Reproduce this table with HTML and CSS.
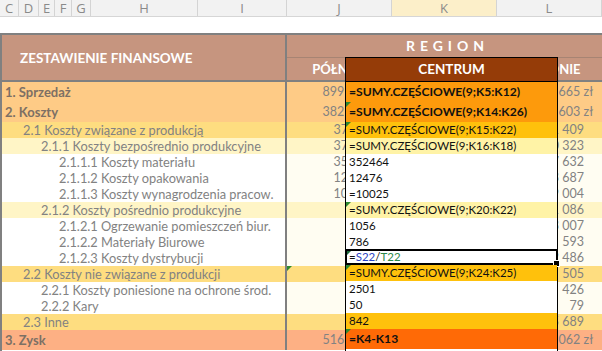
FILE: index.html
```html
<!DOCTYPE html>
<html lang="pl">
<head>
<meta charset="utf-8">
<link rel="stylesheet" href="styles.css">
</head>
<body>
<div class="colbar">
  <div class="ch">C</div><div class="ch">D</div><div class="ch">E</div><div class="ch">F</div><div class="ch">G</div>
  <div class="ch">H</div><div class="ch">I</div><div class="ch">J</div><div class="ch sel">K</div><div class="ch">L</div>
</div>
<div class="gap"></div>
<div class="sheet">
  <div class="head">
    <div class="title">ZESTAWIENIE FINANSOWE</div>
    <div class="region">REGION</div>
    <div class="subhead"><div>PÓŁNOC</div><div></div><div class="south">POŁUDNIE</div></div>
  </div>

  <div class="row big t-orange"><div class="lbl b i0">1. Sprzedaż</div><div class="val zl">899 215 zł</div><div class="val"></div><div class="val zl">899 665 zł</div></div>
  <div class="row big t-orange"><div class="lbl b i0">2. Koszty</div><div class="val zl">382 940 zł</div><div class="val"></div><div class="val zl">387 603 zł</div></div>
  <div class="row t-gold"><div class="lbl i1">2.1 Koszty związane z produkcją</div><div class="val">37 020</div><div class="val"></div><div class="val">371 409</div></div>
  <div class="row t-light"><div class="lbl i2">2.1.1 Koszty bezpośrednio produkcyjne</div><div class="val">37 965</div><div class="val"></div><div class="val">350 323</div></div>
  <div class="row t-white"><div class="lbl i3">2.1.1.1 Koszty materiału</div><div class="val">35 464</div><div class="val"></div><div class="val">327 632</div></div>
  <div class="row t-white"><div class="lbl i3">2.1.1.2 Koszty opakowania</div><div class="val">12 476</div><div class="val"></div><div class="val">13 687</div></div>
  <div class="row t-white"><div class="lbl i3">2.1.1.3 Koszty wynagrodzenia pracow.</div><div class="val">10 025</div><div class="val"></div><div class="val">19 004</div></div>
  <div class="row t-light"><div class="lbl i2">2.1.2 Koszty pośrednio produkcyjne</div><div class="val">903</div><div class="val"></div><div class="val">11 086</div></div>
  <div class="row t-white"><div class="lbl i3">2.1.2.1 Ogrzewanie pomieszczeń biur.</div><div class="val">586</div><div class="val"></div><div class="val">3 007</div></div>
  <div class="row t-white"><div class="lbl i3">2.1.2.2 Materiały Biurowe</div><div class="val">98</div><div class="val"></div><div class="val">593</div></div>
  <div class="row t-white"><div class="lbl i3">2.1.2.3 Koszty dystrybucji</div><div class="val">219</div><div class="val"></div><div class="val">12 486</div></div>
  <div class="row t-gold"><div class="lbl i1">2.2 Koszty nie związane z produkcji</div><div class="val mark">551</div><div class="val"></div><div class="val">505</div></div>
  <div class="row t-white"><div class="lbl i2">2.2.1 Koszty poniesione na ochrone środ.</div><div class="val">501</div><div class="val"></div><div class="val">426</div></div>
  <div class="row t-white"><div class="lbl i2">2.2.2 Kary</div><div class="val">50</div><div class="val"></div><div class="val">79</div></div>
  <div class="row t-gold"><div class="lbl i1">2.3 Inne</div><div class="val">842</div><div class="val"></div><div class="val">15 689</div></div>
  <div class="row big t-salmon"><div class="lbl b i0">3. Zysk</div><div class="val zl">516 275 zł</div><div class="val"></div><div class="val zl">512 062 zł</div></div>

  <div class="zoomcol">
    <div class="zhead">CENTRUM</div>
    <div class="zc big b c-orange">=SUMY.CZĘŚCIOWE(9;K5:K12)</div>
    <div class="zc big b c-orange mark">=SUMY.CZĘŚCIOWE(9;K14:K26)</div>
    <div class="zc c-gold mark">=SUMY.CZĘŚCIOWE(9;K15:K22)</div>
    <div class="zc c-light">=SUMY.CZĘŚCIOWE(9;K16:K18)</div>
    <div class="zc">352464</div>
    <div class="zc">12476</div>
    <div class="zc">=10025</div>
    <div class="zc c-light mark">=SUMY.CZĘŚCIOWE(9;K20:K22)</div>
    <div class="zc">1056</div>
    <div class="zc">786</div>
    <div class="zc active mark-dark">=<span class="ref1">S22</span>/<span class="ref2">T22</span><span class="handle"></span></div>
    <div class="zc c-gold mark">=SUMY.CZĘŚCIOWE(9;K24:K25)</div>
    <div class="zc">2501</div>
    <div class="zc">50</div>
    <div class="zc c-gold">842</div>
    <div class="zc big b c-red mark">=K4-K13</div>
  </div>
</div>
</body>
</html>
```

FILE: styles.css
```css
html, body {
  margin: 0;
  padding: 0;
  background: #ffffff;
}
body {
  width: 602px;
  height: 351px;
  overflow: hidden;
  font-family: Lato, "Open Sans", sans-serif;
}

/* column letters bar */
.colbar {
  display: grid;
  grid-template-columns: 19px 20px 16px 17px 19px 107px 89px 105px 105px 105px;
  height: 17px;
  background: #f2f2f2;
  border-bottom: 1px solid #d6d6d6;
  box-sizing: border-box;
}
.ch {
  border-right: 1px solid #d4d4d4;
  color: #8a8a8a;
  font-family: "Open Sans", sans-serif;
  font-size: 13px;
  line-height: 16px;
  text-align: center;
}
.ch.sel { background: #fcefc9; }

.gap { height: 16px; }

/* sheet */
.sheet {
  position: relative;
  border-top: 2px solid #808080;
  border-left: 2px solid #808080;
  width: 601px;
  height: 316px;
  overflow: hidden;
}

.head {
  display: grid;
  grid-template-columns: 285px 316px;
  grid-template-rows: 22px 23px;
  background: #c6957f;
  border-bottom: 2px solid #808080;
  color: #ffffff;
  font-weight: 700;
}
.title {
  grid-row: 1 / span 2;
  border-right: 2px solid #808080;
  display: flex;
  align-items: center;
  padding-left: 18px;
  font-size: 13.5px;
}
.region {
  text-align: center;
  letter-spacing: 5px;
  font-size: 14px;
  line-height: 22px;
  padding-left: 5px;
}
.subhead {
  display: grid;
  grid-template-columns: 105px 105px 106px;
  border-top: 1px solid #a78473;
  font-size: 13px;
  line-height: 22px;
  text-align: center;
}
.subhead .south { padding-right: 5px; }

.row {
  display: grid;
  grid-template-columns: 285px 105px 105px 106px;
  height: 16px;
  font-size: 12.8px;
  line-height: 16px;
  color: #828282;
}
.row.big { height: 20px; line-height: 20px; font-size: 13px; }
.lbl {
  border-right: 2px solid #808080;
  white-space: nowrap;
  overflow: hidden;
}
.lbl.b { font-weight: 700; color: #7d7064; }
.i0 { padding-left: 3px; }
.i1 { padding-left: 21px; }
.i2 { padding-left: 39px; }
.i3 { padding-left: 57px; }
.val {
  position: relative;
  text-align: right;
  padding-right: 19px;
  white-space: nowrap;
  font-size: 12.5px;
}
.val.zl { padding-right: 10px; }

.t-orange { background: #fecb86; }
.t-gold { background: #fedd80; }
.t-light { background: #fff5c6; }
.t-white { background: #fffdf2; }
.t-white .lbl { background: #ffffff; }
.t-salmon { background: #fdb084; }

.mark::before {
  content: "";
  position: absolute;
  left: 0;
  top: 0;
  border-top: 5px solid #2f8a2f;
  border-right: 5px solid transparent;
}

/* magnified column K */
.zoomcol {
  position: absolute;
  left: 343px;
  top: 22px;
  width: 211px;
  bottom: 0;
  border: 1px solid #000;
  border-bottom: none;
  background: #ffffff;
  color: #111;
}
.zhead {
  height: 23px;
  line-height: 23px;
  background: #953c08;
  color: #fff;
  font-weight: 700;
  font-size: 13.5px;
  text-align: center;
  border-bottom: 1px solid #000;
}
.zc {
  position: relative;
  height: 16px;
  line-height: 16px;
  padding-left: 3px;
  font-size: 11.5px;
  white-space: nowrap;
}
.zc.big { height: 20px; line-height: 20px; }
.zc.b { font-weight: 700; font-size: 12.1px; }
.c-orange { background: #fd9a0c; }
.c-gold { background: #ffc10c; }
.c-light { background: #fff3a6; }
.c-red { background: #ff6a06; }

.active {
  box-sizing: border-box;
  border: 2px solid #000;
  margin: -1px -1px 0 -1px;
  padding-left: 2px;
  line-height: 12px;
}
.ref1 { color: #2b43c4; }
.ref2 { color: #2c8a4a; }
.handle {
  position: absolute;
  right: -4px;
  bottom: -4px;
  width: 5px;
  height: 5px;
  background: #000;
  border: 1px solid #fff;
}
.mark-dark::before {
  content: "";
  position: absolute;
  left: 0;
  top: 0;
  border-top: 4px solid #1e6a3a;
  border-right: 4px solid transparent;
}
```
